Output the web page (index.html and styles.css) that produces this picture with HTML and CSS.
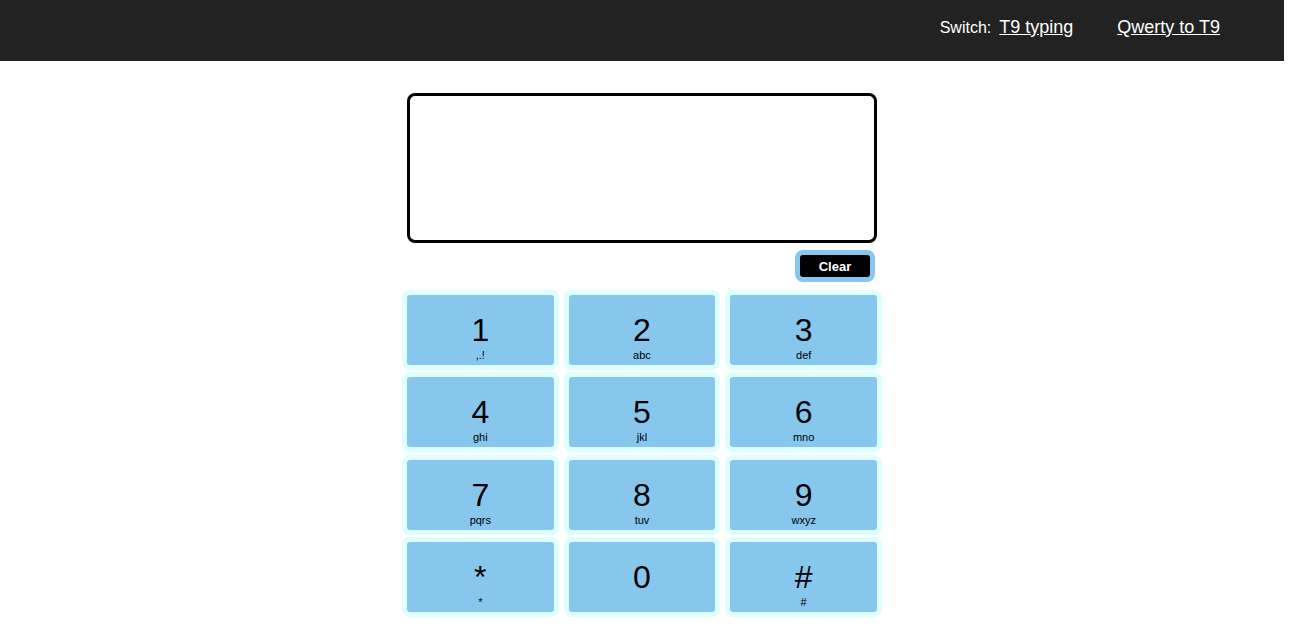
FILE: index.html
```html
<!DOCTYPE html>
<html lang="en">
<head>
<meta charset="utf-8">
<meta name="viewport" content="width=device-width, initial-scale=1">
<title>T9 typing</title>
<link rel="stylesheet" href="styles.css">
</head>
<body>
<header class="topbar">
  <nav class="switcher">
    <span class="switch-label">Switch:</span>
    <a class="switch-link" href="#typing">T9 typing</a>
    <a class="switch-link" href="#qwerty">Qwerty to T9</a>
  </nav>
</header>
<main class="phone">
  <textarea class="screen" aria-label="Typed text"></textarea>
  <button class="clear" type="button">Clear</button>
  <div class="keypad">
    <button class="key" type="button"><span class="digit">1</span><span class="letters">,.!</span></button>
    <button class="key" type="button"><span class="digit">2</span><span class="letters">abc</span></button>
    <button class="key" type="button"><span class="digit">3</span><span class="letters">def</span></button>
    <button class="key" type="button"><span class="digit">4</span><span class="letters">ghi</span></button>
    <button class="key" type="button"><span class="digit">5</span><span class="letters">jkl</span></button>
    <button class="key" type="button"><span class="digit">6</span><span class="letters">mno</span></button>
    <button class="key" type="button"><span class="digit">7</span><span class="letters">pqrs</span></button>
    <button class="key" type="button"><span class="digit">8</span><span class="letters">tuv</span></button>
    <button class="key" type="button"><span class="digit">9</span><span class="letters">wxyz</span></button>
    <button class="key" type="button"><span class="digit">*</span><span class="letters">*</span></button>
    <button class="key" type="button"><span class="digit">0</span><span class="letters"></span></button>
    <button class="key" type="button"><span class="digit">#</span><span class="letters">#</span></button>
  </div>
</main>
</body>
</html>
```

FILE: styles.css
```css
* {
  box-sizing: border-box;
}

body {
  margin: 0 15px 0 0;
  background: #fff;
  color: #000;
  font-family: "Liberation Sans", Arial, sans-serif;
  font-size: 16px;
}

.topbar {
  padding: 17px 64px 23px;
  background: #222;
  color: #fff;
}

.switcher {
  display: flex;
  justify-content: flex-end;
  align-items: baseline;
  line-height: 21px;
}

.switch-label {
  margin-right: 8px;
}

.switch-link {
  color: #fff;
  font-size: 18px;
}

.switch-link + .switch-link {
  margin-left: 44px;
}

.phone {
  display: flex;
  flex-direction: column;
  align-items: center;
  width: 100%;
  max-width: 480px;
  margin: 32px auto 16px;
}

.screen {
  display: block;
  width: calc(100% - 10px);
  height: 150px;
  padding: 8px;
  border: 3px solid #000;
  border-radius: 8px;
  background: #fff;
  font: inherit;
  resize: none;
}

.clear {
  align-self: flex-end;
  width: 80px;
  height: 32px;
  margin: 7px 7px 8px 0;
  padding: 0;
  border: 5px solid #87c7ed;
  border-radius: 8px;
  background: #000;
  color: #fff;
  font: bold 13px "Liberation Sans", Arial, sans-serif;
}

.keypad {
  display: grid;
  grid-template-columns: repeat(3, 1fr);
  column-gap: 5px;
  align-content: space-between;
  width: 100%;
  min-height: 327px;
}

.key {
  display: flex;
  flex-direction: column;
  align-items: center;
  height: 80px;
  padding: 17px 0 0;
  border: 5px solid #dff;
  border-radius: 8px;
  background: #87c7ed;
  color: #000;
  font-family: inherit;
}

.digit {
  font-size: 32px;
  line-height: 36px;
}

.letters {
  min-height: 14px;
  font-size: 11px;
  line-height: 14px;
}
```
